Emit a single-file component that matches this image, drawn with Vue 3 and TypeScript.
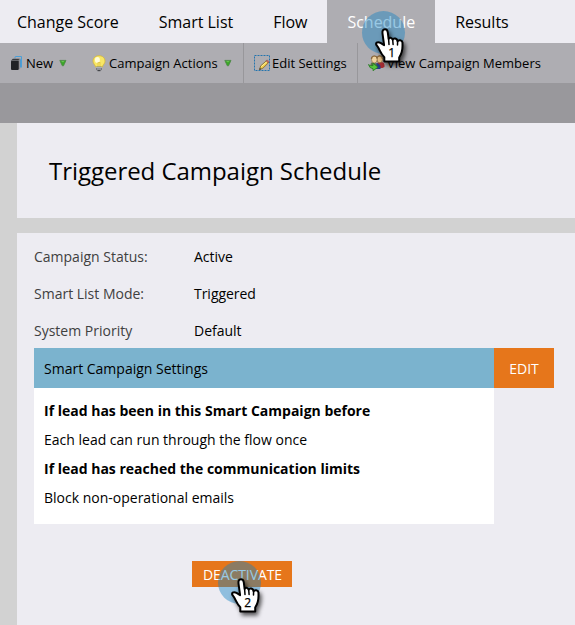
<script setup lang="ts">
interface Field { label: string; value: string }
interface Rule { heading: string; text: string }

const tabs: { label: string; active?: boolean }[] = [
  { label: 'Change Score' },
  { label: 'Smart List' },
  { label: 'Flow' },
  { label: 'Schedule', active: true },
  { label: 'Results' },
]
const fields: Field[] = [
  { label: 'Campaign Status:', value: 'Active' },
  { label: 'Smart List Mode:', value: 'Triggered' },
  { label: 'System Priority', value: 'Default' },
]
const rules: Rule[] = [
  { heading: 'If lead has been in this Smart Campaign before', text: 'Each lead can run through the flow once' },
  { heading: 'If lead has reached the communication limits', text: 'Block non-operational emails' },
]
const steps: number[] = [1, 2]
</script>

<template>
  <div class="app">
    <nav class="tabs">
      <a v-for="t in tabs" :key="t.label" class="tab" :class="{ active: t.active }">{{ t.label }}</a>
    </nav>

    <div class="toolbar">
      <div class="group first">
        <button class="tool new">
          <svg class="icon-new" width="12" height="14" viewBox="0 0 12 14">
            <path d="M4 2.500V1.300Q4 .5 5 .5h5.500v10" fill="none" stroke="#4a9fd8" />
            <path d="M9 3.500L11 1.500v10H9z" fill="#4a9fd8" />
            <path d="M.2 4.400L1.800 2.800h6.700L7.600 4.400z" fill="#3a3b3e" />
            <rect x="0" y="4.600" width="7.800" height="9.400" rx="1" fill="#222326" />
            <path d="M.8 4.500h6.700l1.200-1.700v9.500l-.9 1.200" fill="none" stroke="#77787c" stroke-width=".6" />
          </svg>
          <span>New</span>
          <svg class="caret" width="8" height="8" viewBox="0 0 8 8"><path d="M.8 1.400h6.200L4.500 6.800H3.300z" fill="#3aa527" stroke="#4d8746" stroke-width=".8" /><path d="M2 2h3.500L4 3.500z" fill="#6cc455" /></svg>
        </button>
        <button class="tool actions">
          <svg class="icon-bulb" width="14" height="17" viewBox="0 0 14 17">
            <path d="M7 .7C3.300.7 1 3 1 6.200c0 2.400 2 3.400 2.800 6h6.400c.8-2.600 2.800-3.600 2.800-6C13 3 10.700.7 7 .7z" fill="#f8e766" stroke="#d6b638" stroke-width=".8" />
            <ellipse cx="5.400" cy="5" rx="2.500" ry="3" fill="#fffcd9" />
            <path d="M6 11V7l1 1 1-1v4" fill="none" stroke="#d9b93b" stroke-width=".6" />
            <rect x="4" y="11.500" width="6" height="3.700" rx=".8" fill="#777a80" />
            <path d="M4 12.500h6M5 14h4" stroke="#d4d5d8" stroke-width=".6" />
            <rect x="5.500" y="15" width="3" height="1.200" fill="#44464a" />
          </svg>
          <span>Campaign Actions</span>
          <svg class="caret" width="8" height="8" viewBox="0 0 8 8"><path d="M.8 1.400h6.200L4.500 6.800H3.300z" fill="#3aa527" stroke="#4d8746" stroke-width=".8" /><path d="M2 2h3.500L4 3.500z" fill="#6cc455" /></svg>
        </button>
      </div>
      <div class="group second">
        <button class="tool">
          <svg class="icon-edit" width="16" height="16" viewBox="0 0 16 16">
            <rect x=".5" y=".5" width="15" height="15" fill="none" stroke="#2574ae" stroke-dasharray="2 1" />
            <path d="M5.500 14.500l1.200-3.700 5.700-5 2 2-5.500 5.400z" fill="#f1cb48" stroke="#6d5826" stroke-width=".7" />
            <path d="M7.300 11.600l5.500-4.800" stroke="#fff3a2" />
            <path d="M12 5.800l1.300-.9 1.800 1.800-1 1.200z" fill="#c86a60" stroke="#823c38" stroke-width=".4" />
            <path d="M5.300 14.800l.6-1.800 1.400 1.200z" fill="#292929" />
          </svg>
          <span>Edit Settings</span>
        </button>
      </div>
      <div class="group third">
        <button class="tool">
          <svg class="icon-people" width="17" height="16" viewBox="0 0 17 16">
            <path d="M9 13V9q0-2 3-2h2q2.500.5 2.500 3v2l-2 1z" fill="#a52c32" />
            <path d="M7 14V9l2-1 2 1 1.500 2v3z" fill="#253f82" />
            <path d="M2.500 9q.5-2 3-2l3 2v3h-6z" fill="#5b744b" />
            <ellipse cx="11.800" cy="4.300" rx="2.800" ry="3.500" fill="#e0bd85" stroke="#76582f" stroke-width=".6" />
            <ellipse cx="6.300" cy="4.500" rx="2.800" ry="3.500" fill="#efd3a0" stroke="#886839" stroke-width=".6" />
            <path d="M3.400 4Q3.500 1 6.300 1t2.800 2.500M9.200 2.300q1.300-1.800 3.300-1.300t2 3" fill="none" stroke="#8d6a3c" stroke-width="1.200" />
            <path d="M.5 9.500q1 1.600 4.500 1.200V8.200l5 4-5 3.500v-2Q1.300 13.500.5 9.500z" fill="#58c63d" stroke="#267923" stroke-width=".8" />
          </svg>
          <span>View Campaign Members</span>
        </button>
      </div>
    </div>
    <div class="band"></div>

    <main class="content">
      <header class="title-card"><h1>Triggered Campaign Schedule</h1></header>
      <section class="details">
        <dl class="fields">
          <div v-for="f in fields" :key="f.label" class="field"><dt>{{ f.label }}</dt><dd>{{ f.value }}</dd></div>
        </dl>
        <div class="settings-head">
          <h2>Smart Campaign Settings</h2>
          <button class="edit">EDIT</button>
        </div>
        <div class="rules">
          <template v-for="r in rules" :key="r.heading"><strong>{{ r.heading }}</strong><p>{{ r.text }}</p></template>
        </div>
        <button class="deactivate">DEACTIVATE</button>
      </section>
    </main>

    <div v-for="n in steps" :key="n" class="pointer" :class="`step-${n}`">
      <svg width="56" height="66" viewBox="0 0 56 66">
        <circle cx="23.500" cy="23.500" r="21.500" fill="#1282c2" fill-opacity=".43" />
        <path class="hand" d="M25 20.300C22.700 20.300 22.200 22.100 22.500 24.500L24.100 36.200L20.500 33.900C17.400 32.300 14.600 34 16.900 36.700C20.200 40.500 20.200 44.500 24.300 48.200V52.500H39.200V48.500C41.200 45.500 42.500 42 42.500 37V33.500C42.100 30.900 38.500 30.700 37.600 32.400C37.200 28.900 33.400 28.700 32.700 30.800C32 28.200 29 28 28.600 30L27.800 23.500C27.500 21.200 26.900 20.300 25 20.300Z" />
        <path d="M28.600 30L29 35.500M32.700 30.800L33.100 35.500M37.600 32.400L37.500 36" class="knuckles" />
        <text x="31.700" y="48" text-anchor="middle">{{ n }}</text>
      </svg>
    </div>
  </div>
</template>

<style>
body { margin: 0; overflow: hidden; }
</style>

<style scoped>
* { box-sizing: border-box; }
.app {
  position: relative;
  width: 575px;
  height: 625px;
  display: flex;
  flex-direction: column;
  overflow: hidden;
  background: #d2d2d2;
  font: 14px/20px "Open Sans", "Noto Sans", sans-serif;
  color: #000;
}
button { border: 0; padding: 0; margin: 0; background: none; font: inherit; color: inherit; }
h1, h2, p, dl, dd { margin: 0; font-weight: 400; }
svg { display: block; flex: none; }
.tabs { display: flex; height: 43px; flex: none; background: #edecf2; }
.tab { padding: 0 20px; font-size: 16px; line-height: 44px; letter-spacing: -0.02px; white-space: nowrap; }
.tab:first-child { padding-left: 17px; }
.tab.active { background: #aeadb2; color: #fff; }
.toolbar { display: flex; height: 40px; flex: none; background: #aeadb2; font-size: 13px; }
.group { display: flex; align-items: center; border-right: 1px solid #98979b; white-space: nowrap; }
.group.third { border: 0; padding-left: 10px; }
.first { width: 244px; padding-left: 11px; }
.second { width: 114px; padding-left: 10px; }
.tool { display: flex; align-items: center; }
.new { width: 81px; }
.icon-new { margin-right: 3px; }
.icon-bulb { margin-right: 3px; }
.icon-edit { margin-right: 2px; }
.icon-people { margin-right: 2px; }
.caret { margin-left: 6px; }
.band { height: 40px; flex: none; background: #99989c; }
.content { flex: 1; display: flex; flex-direction: column; gap: 15px; padding-left: 17px; }
.title-card { height: 95px; flex: none; padding: 30px 32px; background: #edecf2; }
h1 { font-size: 24px; line-height: 36px; letter-spacing: -0.04px; white-space: nowrap; }
.details { flex: 1; background: #edecf2; padding: 14px 17px 0; }
.fields { height: 101px; display: flex; flex-direction: column; gap: 17px; }
.field { display: flex; }
dt { width: 160px; color: #404040; }
.field dd { letter-spacing: -0.03px; }
.settings-head { display: flex; height: 40px; width: 520px; }
h2 { width: 460px; padding-left: 10px; background: #7bb3ce; font-size: 14px; line-height: 41px; }
.edit { width: 60px; padding-top: 2px; background: #e6761b; color: #fff; }
.rules { display: flex; flex-direction: column; gap: 9px; width: 460px; height: 136px; padding: 13px 10px; background: #fff; }
.deactivate { display: block; width: 100px; height: 26px; margin: 37px 0 0 158px; padding: 2px 0 0 1px; background: #e6761b; color: #fff; letter-spacing: -0.1px; }
.pointer { position: absolute; }
.step-1 { left: 360px; top: 9px; }
.step-2 { left: 216px; top: 559px; }
.hand { fill: #fff; stroke: #000; stroke-width: 2; stroke-linejoin: round; filter: drop-shadow(2px 3px 2px rgba(0, 0, 0, .65)); }
.knuckles { fill: none; stroke: #000; stroke-width: 1.5; stroke-linecap: round; }
.pointer text { font: 12px "Open Sans", sans-serif; fill: #000; stroke: #000; stroke-width: .25; }
</style>
